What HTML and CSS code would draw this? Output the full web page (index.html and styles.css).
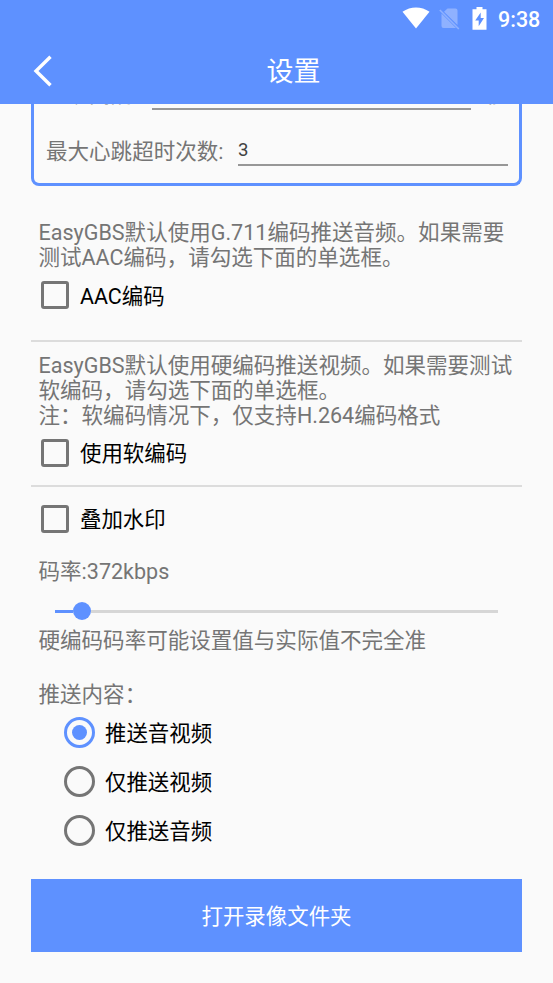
FILE: index.html
```html
<!DOCTYPE html>
<html lang="zh-CN">
<head>
<meta charset="utf-8">
<title>设置</title>
<link rel="stylesheet" href="styles.css">
</head>
<body>
<header class="header">
  <div class="status">
    <svg class="wifi" width="28" height="22" viewBox="0 0 28 22"><path d="M.5 4.8C8.500-1.100 19.500-1.100 27.500 4.800L14 21.500Z" fill="#fff"/></svg>
    <svg class="sim" width="21" height="22" viewBox="0 0 21 22"><path d="M8.500.5H16.500Q18.500.5 18.500 2.500V17L5 3.700ZM2.500 5.500L17 20H4.500Q2.500 20 2.500 18Z" fill="#8fb1ff"/><path d="M.8 2L19.800 21" stroke="#8fb1ff" stroke-width="1.600"/></svg>
    <svg class="battery" width="15" height="23" viewBox="0 0 15 23"><path d="M4.500 0H10.500V2.300H14.500V22.700H.5V2.300H4.500Z" fill="#fff"/><path d="M8.700 5.500L3.200 13.500H6.700V19.200L12 11H8.700Z" fill="#5e91ff"/></svg>
    <span class="clock">9:38</span>
  </div>
  <div class="titlebar">
    <svg class="back" width="20" height="32" viewBox="0 0 20 32"><path d="M17.500 1.700L3 16L17.500 30.300" fill="none" stroke="#fff" stroke-width="3.400"/></svg>
    <h1 class="title">设置</h1>
  </div>
</header>
<main class="content">
  <section class="panel">
    <div class="field field-cut"><label>心跳间隔:</label><div class="input"></div><span class="unit">秒</span></div>
    <div class="field"><label>最大心跳超时次数:</label><div class="input">3</div></div>
  </section>
  <section class="group audio">
    <p class="note">EasyGBS默认使用G.711编码推送音频。如果需要<br>测试AAC编码，请勾选下面的单选框。</p>
    <label class="check"><i class="box"></i><span>AAC编码</span></label>
  </section>
  <section class="group video">
    <p class="note">EasyGBS默认使用硬编码推送视频。如果需要测试<br>软编码，请勾选下面的单选框。<br>注：软编码情况下，仅支持H.264编码格式</p>
    <label class="check"><i class="box"></i><span>使用软编码</span></label>
  </section>
  <section class="options">
    <label class="check"><i class="box"></i><span>叠加水印</span></label>
    <p class="note rate">码率:372kbps</p>
    <div class="slider"><div class="fill"></div><div class="thumb"></div><div class="rest"></div></div>
    <p class="note">硬编码码率可能设置值与实际值不完全准</p>
    <p class="note push">推送内容：</p>
    <div class="radios">
      <label class="radio"><i class="ring on"></i><span>推送音视频</span></label>
      <label class="radio"><i class="ring"></i><span>仅推送视频</span></label>
      <label class="radio"><i class="ring"></i><span>仅推送音频</span></label>
    </div>
  </section>
  <button class="open">打开录像文件夹</button>
</main>
</body>
</html>
```
FILE: styles.css
```css
* { box-sizing: border-box; }
body {
  margin: 0;
  height: 983px;
  overflow: hidden;
  background: #fafafa;
  color: #000;
  font: 21.45px/25px Roboto, "Noto Sans CJK SC", sans-serif;
}
p, h1 { margin: 0; font-weight: 400; }
.header { height: 104px; background: #5e91ff; color: #fff; }
.status { height: 38px; display: flex; justify-content: flex-end; align-items: center; padding-right: 12px; }
.wifi { margin-right: 9px; margin-top: -2px; }
.sim { margin-right: 12px; margin-top: -1px; }
.battery { margin-right: 11px; margin-top: -1px; }
.clock { font-size: 21.5px; font-weight: 500; width: 43px; white-space: nowrap; }
.titlebar { height: 66px; display: grid; grid-template-columns: 94px 1fr 60px; align-items: center; }
.back { margin-left: 33px; }
.title { text-align: center; font-size: 27px; line-height: 36px; padding-top: 2px; }
.content { padding: 0 31px; }
.panel {
  height: 82px;
  overflow: hidden;
  border: 3px solid #5e91ff;
  border-top: 0;
  border-radius: 0 0 8px 8px;
  padding: 0 11px 0 12px;
  color: #757575;
}
.field { height: 56px; display: flex; align-items: flex-end; }
.field label { white-space: nowrap; padding-bottom: 2px; font-size: 21.54px; }
.field-cut { margin-top: -50px; }
.field-cut label, .field-cut .unit { padding-bottom: 3px; }
.input { flex: 1; margin-left: 14.5px; height: 29px; padding-top: 1px; border-bottom: 2px solid #979797; color: #424242; font-size: 18.6px; line-height: 25px; }
.unit { width: 37px; padding-left: 14px; }
.note { color: #757575; padding-left: 7.5px; white-space: nowrap; font-size: 21.54px; }
.group { border-bottom: 2px solid #dcdcdc; }
.audio { height: 156px; padding-top: 34px; }
.video { height: 145px; padding-top: 11px; }
.check { display: flex; align-items: center; height: 50px; gap: 11px; padding-left: 10px; }
.audio .check span { padding-top: 2px; }
.box { width: 28px; height: 28px; border: 3px solid #757575; border-radius: 3px; }
.options { height: 392px; padding-top: 7px; }
.rate { margin-top: 15px; }
.slider { display: flex; align-items: center; height: 44px; padding: 10px 24px 0; }
.fill { width: 18px; height: 3px; background: #5e91ff; }
.thumb { width: 18px; height: 18px; border-radius: 50%; background: #5e91ff; }
.rest { flex: 1; height: 3px; background: #d6d6d6; }
.push { margin-top: 29px; }
.radios { padding: 1px 0 0 33px; }
.radio { display: flex; align-items: center; height: 49px; gap: 10px; }
.radio span { padding-top: 2px; }
.ring { display: grid; place-items: center; width: 31px; height: 31px; border: 3px solid #757575; border-radius: 50%; }
.on { border-color: #5e91ff; }
.on::after { content: ""; width: 15px; height: 15px; border-radius: 50%; background: #5e91ff; }
.open { display: block; width: 100%; height: 73px; padding: 2px 0 0; border: 0; background: #5e91ff; color: #fff; font: inherit; }
```
